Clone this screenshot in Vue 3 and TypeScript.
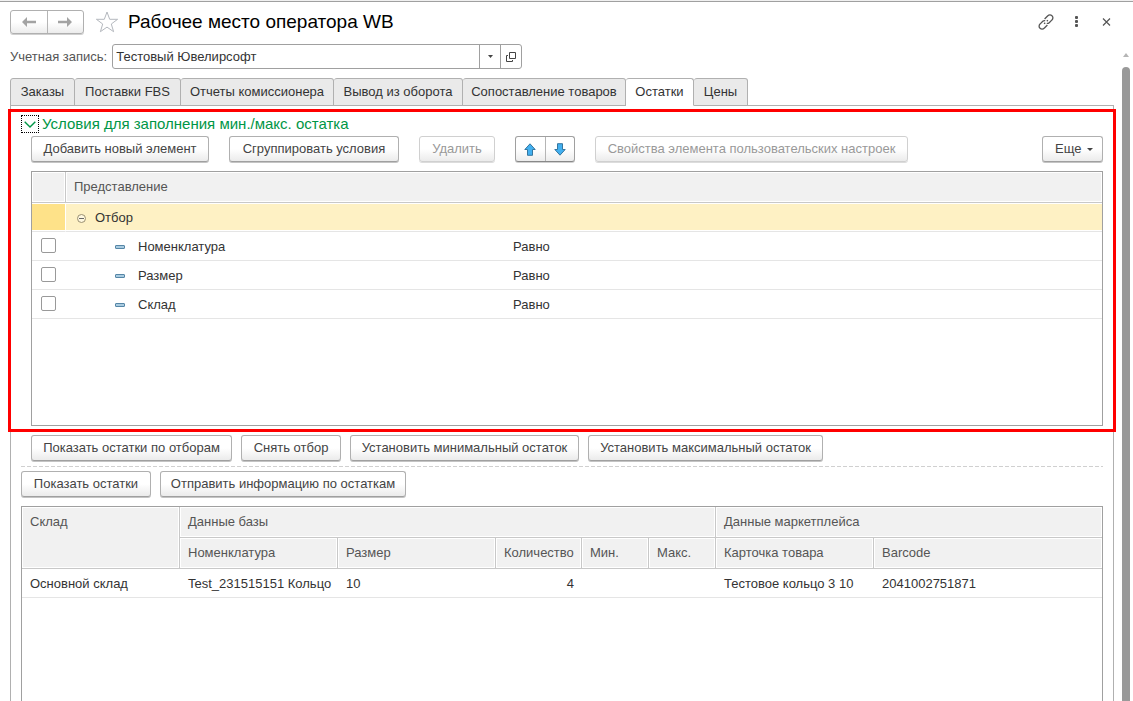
<script setup lang="ts">
import { ref } from 'vue'

const account = ref('Тестовый Ювелирсофт')
const tabs = ['Заказы', 'Поставки FBS', 'Отчеты комиссионера', 'Вывод из оборота', 'Сопоставление товаров', 'Остатки', 'Цены']
const activeTab = ref('Остатки')

interface Condition { name: string; compare: string; used: boolean }
const conditions = ref<Condition[]>([
  { name: 'Номенклатура', compare: 'Равно', used: false },
  { name: 'Размер', compare: 'Равно', used: false },
  { name: 'Склад', compare: 'Равно', used: false },
])

const filterActions = ['Показать остатки по отборам', 'Снять отбор', 'Установить минимальный остаток', 'Установить максимальный остаток']
const stockActions = ['Показать остатки', 'Отправить информацию по остаткам']
</script>

<template>
  <div class="window">
    <header class="titlebar">
      <div class="pair nav">
        <button type="button" aria-label="Назад">
          <svg width="14" height="10" viewBox="0 0 14 10"><path d="M0 5 5 0V3.7H14V6.3H5V10Z" fill="#a3a3a3" /></svg>
        </button>
        <button type="button" aria-label="Вперед">
          <svg width="14" height="10" viewBox="0 0 14 10"><path d="M14 5 9 0V3.7H0V6.3H9V10Z" fill="#a3a3a3" /></svg>
        </button>
      </div>
      <button type="button" class="plain star" aria-label="В избранное">
        <svg width="24" height="22" viewBox="0 0 24 22"><path d="M12 1 14.7 8.3H22.6L16.3 13 18.6 20.7 12 16.1 5.4 20.7 7.7 13 1.4 8.3H9.3Z" fill="none" stroke="#b4b8be" /></svg>
      </button>
      <h1>Рабочее место оператора WB</h1>
      <div class="tools">
        <button type="button" class="plain" aria-label="Получить ссылку">
          <svg width="16" height="16" viewBox="0 0 16 16" fill="none" stroke="#555" stroke-width="1.3">
            <path d="M6.6 5 9.8 1.8a2.7 2.7 0 0 1 4.2 0 2.8 2.8 0 0 1 0 4.1L11.2 8.7a2.7 2.7 0 0 1-2.4.7M9.4 11 6.2 14.2a2.7 2.7 0 0 1-4.2 0 2.8 2.8 0 0 1 0-4.1L4.8 7.3a2.7 2.7 0 0 1 2.4-.7M9.9 6.1 8.8 7.2M6.1 9.9 7.2 8.8" />
          </svg>
        </button>
        <button type="button" class="plain" aria-label="Меню">
          <svg width="16" height="16" viewBox="0 0 16 16" fill="#555"><rect x="7" y="2" width="3" height="3" rx="1" /><rect x="7" y="6" width="3" height="3" rx="1" /><rect x="7" y="10" width="3" height="3" rx="1" /></svg>
        </button>
        <button type="button" class="plain" aria-label="Закрыть">
          <svg width="16" height="16" viewBox="0 0 16 16" fill="none" stroke="#555" stroke-width="1.2"><path d="M5 4.5 12 11.5M12 4.5 5 11.5" /></svg>
        </button>
      </div>
    </header>

    <div class="body">
      <main class="content">
        <div class="account">
          <label for="account">Учетная запись:</label>
          <div class="combo">
            <input id="account" v-model="account" type="text" />
            <button type="button" aria-label="Выбрать"><svg width="5" height="3" viewBox="0 0 5 3"><path d="M0 0H5L2.5 3Z" fill="#444" /></svg></button>
            <button type="button" aria-label="Открыть">
              <svg width="10" height="10" viewBox="0 0 10 10" fill="none" stroke="#444"><path d="M3.5 .5H9.5V6.5H3.5ZM2 3.5H.5V9.5H6.5V8" /></svg>
            </button>
          </div>
        </div>

        <div class="tabs" role="tablist">
          <button v-for="tab in tabs" :key="tab" type="button" role="tab" :aria-selected="tab === activeTab" :class="{ active: tab === activeTab }" @click="activeTab = tab">{{ tab }}</button>
        </div>

        <div class="panel">
          <section class="conditions">
            <h2>
              <button type="button" class="plain toggle" aria-label="Свернуть">
                <svg width="12" height="7" viewBox="0 0 12 7"><path d="M.7 .7 6 6 11.3 .7" fill="none" stroke="#009646" stroke-width="1.4" /></svg>
              </button>
              Условия для заполнения мин./макс. остатка
            </h2>
            <div class="toolbar">
              <button type="button" class="btn">Добавить новый элемент</button>
              <button type="button" class="btn">Сгруппировать условия</button>
              <button type="button" class="btn" disabled>Удалить</button>
              <div class="pair move">
                <button type="button" aria-label="Вверх">
                  <svg width="12" height="13" viewBox="0 0 12 13"><path d="M6 .8 11.2 6.5H8.5V12.3H3.5V6.5H.8Z" fill="#42b0f0" stroke="#35769f" /></svg>
                </button>
                <button type="button" aria-label="Вниз">
                  <svg width="12" height="13" viewBox="0 0 12 13"><path d="M6 12.2 11.2 6.5H8.5V.7H3.5V6.5H.8Z" fill="#42b0f0" stroke="#35769f" /></svg>
                </button>
              </div>
              <button type="button" class="btn" disabled>Свойства элемента пользовательских настроек</button>
              <button type="button" class="btn more">Еще <svg width="6" height="3" viewBox="0 0 6 3"><path d="M0 0H6L3 3Z" fill="#444" /></svg></button>
            </div>
            <div class="list filter">
              <table>
                <colgroup><col class="c-check" /><col class="c-name" /><col /></colgroup>
                <thead><tr><th></th><th colspan="2">Представление</th></tr></thead>
                <tbody>
                  <tr class="group">
                    <td></td>
                    <td colspan="2"><div class="cell">
                      <svg width="9" height="9" viewBox="0 0 9 9" fill="none" stroke="#9a8f70"><circle cx="4.5" cy="4.5" r="4" fill="#fff8e0" /><path d="M2 4.5H7" stroke="#666" /></svg>
                      Отбор
                    </div></td>
                  </tr>
                  <tr v-for="c in conditions" :key="c.name">
                    <td class="check"><input v-model="c.used" type="checkbox" :aria-label="c.name" /></td>
                    <td><div class="cell leaf">
                      <svg width="10" height="4" viewBox="0 0 10 4"><rect x=".5" y=".5" width="9" height="3" rx=".5" fill="#a9cbe0" stroke="#5686a6" /></svg>
                      {{ c.name }}
                    </div></td>
                    <td>{{ c.compare }}</td>
                  </tr>
                </tbody>
              </table>
            </div>
          </section>

          <div class="actions indented">
            <button v-for="a in filterActions" :key="a" type="button" class="btn">{{ a }}</button>
          </div>
          <div class="divider"></div>
          <div class="actions main-actions">
            <button v-for="a in stockActions" :key="a" type="button" class="btn">{{ a }}</button>
          </div>

          <div class="list stock">
            <table>
              <colgroup>
                <col class="c-wide" /><col class="c-wide" /><col class="c-wide" /><col class="c-qty" /><col class="c-lim" /><col class="c-lim" /><col class="c-wide" /><col />
              </colgroup>
              <thead>
                <tr><th rowspan="2" class="tall">Склад</th><th colspan="5">Данные базы</th><th colspan="2">Данные маркетплейса</th></tr>
                <tr><th>Номенклатура</th><th>Размер</th><th>Количество</th><th>Мин.</th><th>Макс.</th><th>Карточка товара</th><th>Barcode</th></tr>
              </thead>
              <tbody>
                <tr><td>Основной склад</td><td>Test_231515151 Кольцо</td><td>10</td><td class="num">4</td><td></td><td></td><td>Тестовое кольцо 3 10</td><td>2041002751871</td></tr>
              </tbody>
            </table>
          </div>
        </div>
      </main>
      <div class="scroller" aria-hidden="true">
        <svg width="6" height="4" viewBox="0 0 6 4"><path d="M3 0 6 4H0Z" fill="#b5b5b5" /></svg>
        <div class="thumb"></div>
      </div>
    </div>
  </div>
</template>

<style>
body { margin: 0; background: #fff; }
</style>

<style scoped>
.window {
  display: flex;
  flex-direction: column;
  box-sizing: border-box;
  height: 100vh;
  overflow: hidden;
  border-top: 1px solid #f0f0f0;
  box-shadow: inset 0 1px #a0a0a0;
  font: 13px/16px "Liberation Sans", Arial, sans-serif;
  color: #333;
}
button, input { font: inherit; color: inherit; margin: 0; box-sizing: border-box; }
button { padding: 0; white-space: nowrap; cursor: pointer; }
svg { display: block; flex: none; }
.plain { border: 0; background: none; display: flex; align-items: center; justify-content: center; }

.titlebar { display: flex; align-items: center; height: 24px; padding: 9px 19px 10px 10px; }
h1 { margin: 0; font-size: 19px; line-height: 24px; font-weight: 400; color: #000; }
.star { margin: 0 9px 0 11px; }
.tools { display: flex; gap: 14px; margin-left: auto; }

.pair { display: flex; box-sizing: border-box; border: 1px solid #a0a0a0; border-bottom-color: #888; border-radius: 3px; background: linear-gradient(#fff 50%, #ececec); box-shadow: 0 1px #d0d0d0; }
.pair button { flex: 1; display: flex; align-items: center; justify-content: center; border: 0; background: none; }
.pair button + button { border-left: 1px solid #b5b5b5; }
.nav { width: 74px; height: 24px; border-color: #b0b0b0; }
.move { width: 60px; height: 26px; }

.body { flex: 1; display: flex; min-height: 0; }
.content { flex: 1; min-width: 0; display: flex; flex-direction: column; padding-left: 10px; }
.scroller { width: 19px; display: flex; flex-direction: column; align-items: center; gap: 10px; padding-top: 9px; box-sizing: border-box; padding-left: 5px; }
.thumb { width: 8px; flex: 1; border-radius: 4px 4px 0 0; background: #999; }

.account { display: flex; align-items: center; gap: 5px; color: #555; }
.combo { display: flex; width: 410px; height: 25px; box-sizing: border-box; border: 1px solid #a0a0a0; border-radius: 3px; color: #333; }
.combo input { flex: 1; min-width: 0; border: 0; padding: 0 3px; background: none; outline: 0; }
.combo button { width: 21px; display: flex; align-items: center; justify-content: center; border: 0; border-left: 1px solid #a0a0a0; background: none; }

.tabs { display: grid; grid-template-columns: 65px 106px 153px 129px 163px 68px 54px; margin-top: 9px; }
.tabs button { height: 28px; border: 1px solid #b0b0b0; border-radius: 3px 3px 0 0; background: #eaeaea; }
.tabs button + button { border-left: 0; }
.tabs .active { position: relative; z-index: 1; background: #fff; border-bottom-color: #fff; }

.panel { flex: 1; min-height: 0; display: flex; flex-direction: column; margin-top: -1px; border: 1px solid #b0b0b0; border-bottom: 0; }

.conditions { margin: 3px -3px 0; padding: 3px 10px; border: 3px solid #f00; }
h2 { display: flex; align-items: center; gap: 3px; margin: 0; height: 18px; font-size: 15px; line-height: 18px; font-weight: 400; color: #009646; }
.toggle { width: 18px; height: 18px; border: 1px dotted #000; }
.toolbar { display: grid; grid-template-columns: 178px 170px 76px 60px 313px 1fr; gap: 20px; margin: 3px 0 9px 10px; }
.btn { height: 26px; border: 1px solid #b0b0b0; border-bottom-color: #a0a0a0; border-radius: 3px; background: linear-gradient(#fff 50%, #ebebeb); box-shadow: 0 1px #c4c4c4; color: #444; }
.btn:disabled { color: #999; border-color: #d0d0d0; box-shadow: 0 1px #dcdcdc; cursor: default; }
.more { justify-self: end; width: 61px; display: flex; align-items: center; gap: 6px; padding-left: 12px; }

.list { border: 1px solid #a0a0a0; box-sizing: border-box; }
.filter { margin-left: 10px; min-height: 255px; }
.stock { flex: 1; margin: 9px 10px 0; border-bottom: 0; }

table { width: 100%; table-layout: fixed; border-collapse: separate; border-spacing: 0; }
th, td { box-sizing: border-box; padding: 0 8px; text-align: left; white-space: nowrap; font-weight: 400; }
th { height: 31px; background: #f1f1f1; color: #555; border-right: 1px solid #c8c8c8; border-bottom: 1px solid #c8c8c8; box-shadow: inset 0 0 0 1px #fff; }
th:last-child { border-right: 0; }
.tall { vertical-align: top; padding-top: 7px; }
td { height: 29px; padding-top: 2px; border-bottom: 1px solid #e5e5e5; }
.check { padding-top: 0; padding-bottom: 1px; }
.num { text-align: right; }
.c-check { width: 34px; }
.c-name { width: 439px; }
.c-wide { width: 158px; }
.c-qty { width: 86px; }
.c-lim { width: 67px; }

.cell { display: flex; align-items: center; gap: 9px; padding-left: 3px; }
.leaf { gap: 13px; padding-left: 41px; }
.group td { background: #fef1c4; box-shadow: inset 0 1px #fff, inset 0 -1px #fff; }
.group td:first-child { background: #fee289; border-right: 1px solid #fff; }
input[type="checkbox"] { appearance: none; display: block; width: 15px; height: 15px; margin: 0 1px; border: 1px solid #999; border-radius: 2px; background: #fff; }

.actions { display: grid; gap: 9px; padding: 0 10px; }
.indented { grid-template-columns: 201px 100px 229px 235px; padding: 3px 20px 5px; }
.main-actions { grid-template-columns: 130px 246px; }
.divider { height: 1px; margin: 0 10px 4px; background: repeating-linear-gradient(90deg, #d0d0d0 0 4px, transparent 4px 6px); }
</style>
